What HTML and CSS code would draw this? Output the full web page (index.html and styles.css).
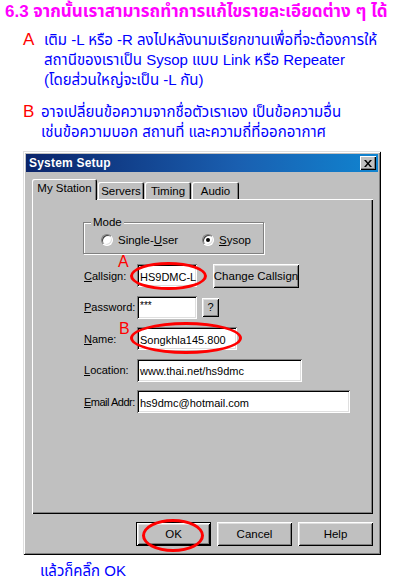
FILE: index.html
```html
<!DOCTYPE html>
<html lang="th">
<head>
<meta charset="utf-8">
<title>System Setup</title>
<link rel="stylesheet" href="styles.css">
</head>
<body>
<div class="page">
  <header class="intro">
    <h1 class="step-title">6.3 จากนั้นเราสามารถทำการแก้ไขรายละเอียดต่าง ๆ ได้</h1>
    <div class="note note-a">
      <span class="note-mark">A</span>
      <p class="note-text">เติม -L  หรือ -R ลงไปหลังนามเรียกขานเพื่อที่จะต้องการให้<br>สถานีของเราเป็น Sysop แบบ Link หรือ Repeater<br>(โดยส่วนใหญ่จะเป็น -L กัน)</p>
    </div>
    <div class="note note-b">
      <span class="note-mark">B</span>
      <p class="note-text">อาจเปลี่ยนข้อความจากชื่อตัวเราเอง เป็นข้อความอื่น<br>เช่นข้อความบอก สถานที่ และความถี่ที่ออกอากาศ</p>
    </div>
  </header>

  <div class="dialog">
    <div class="titlebar">
      <span class="titlebar-text">System Setup</span>
      <span class="close-btn"><svg width="8" height="7" viewBox="0 0 8 7"><path d="M0 0h2l2 2.5L6 0h2L5 3.5 8 7H6L4 4.5 2 7H0l3-3.5z" fill="#000"/></svg></span>
    </div>
    <div class="dialog-body">
      <div class="tabs">
        <span class="tab tab-active">My Station</span>
        <span class="tab tab-servers">Servers</span>
        <span class="tab tab-timing">Timing</span>
        <span class="tab tab-audio">Audio</span>
      </div>
      <div class="panel">
        <fieldset class="group">
          <legend class="group-label">Mode</legend>
          <div class="radios">
            <span class="radio-item radio-first"><span class="radio"></span><span class="radio-text">Single-<u>U</u>ser</span></span>
            <span class="radio-item"><span class="radio radio-on"></span><span class="radio-text"><u>S</u>ysop</span></span>
          </div>
        </fieldset>
        <div class="form">
          <div class="row">
            <span class="label"><u>C</u>allsign:</span>
            <span class="field w-callsign">HS9DMC-L<span class="mark mark-a">A</span><span class="ring ring-a"></span></span>
            <span class="btn btn-change">Change Callsign</span>
          </div>
          <div class="row">
            <span class="label"><u>P</u>assword:</span>
            <span class="field w-callsign field-pw">***</span>
            <span class="btn btn-help">?</span>
          </div>
          <div class="row">
            <span class="label"><u>N</u>ame:</span>
            <span class="field w-name">Songkhla145.800<span class="mark mark-b">B</span><span class="ring ring-b"></span></span>
          </div>
          <div class="row">
            <span class="label"><u>L</u>ocation:</span>
            <span class="field w-location">www.thai.net/hs9dmc</span>
          </div>
          <div class="row">
            <span class="label label-tight"><u>E</u>mail Addr:</span>
            <span class="field w-email">hs9dmc@hotmail.com</span>
          </div>
        </div>
      </div>
      <div class="actions">
        <span class="btn btn-action btn-default">OK<span class="ring ring-ok"></span></span>
        <span class="btn btn-action">Cancel</span>
        <span class="btn btn-action">Help</span>
      </div>
    </div>
  </div>

  <p class="outro">แล้วก็คลิ๊ก OK</p>
</div>
</body>
</html>
```

FILE: styles.css
```css
html, body {
  margin: 0;
  padding: 0;
  background: #fff;
}

.page {
  width: 399px;
  height: 588px;
  overflow: hidden;
  font-family: "Liberation Sans", "Noto Sans Thai", "Noto Sans", sans-serif;
}

/* ---------- intro text ---------- */
.intro {
  padding-top: 2px;
}

.step-title {
  margin: 0;
  padding-left: 5px;
  font-size: 17px;
  line-height: 20px;
  font-weight: bold;
  color: #ff00ff;
  white-space: nowrap;
}

.note {
  display: flex;
  align-items: flex-start;
  color: #0000ff;
}

.note-a {
  margin-top: 8px;
  padding-left: 23px;
}

.note-b {
  margin-top: 12px;
  padding-left: 23px;
}

.note-mark {
  color: #ff0000;
  font-size: 17px;
  line-height: 20px;
  width: 21px;
  flex: none;
}

.note-b .note-mark {
  width: 18px;
}

.note-text {
  margin: 0;
  font-size: 15px;
  line-height: 20px;
  white-space: nowrap;
}

/* ---------- dialog ---------- */
.dialog {
  margin: 9px 0 0 23px;
  width: 358px;
  padding: 3px;
  box-sizing: border-box;
  background: #c0c0c0;
  box-shadow: inset 1px 1px #dfdfdf, inset -1px -1px #000, inset 2px 2px #fff, inset -2px -2px #808080;
  font-family: "Liberation Sans", Arial, sans-serif;
  font-size: 11px;
  color: #000;
}

.titlebar {
  height: 18px;
  display: flex;
  align-items: center;
  justify-content: space-between;
  padding: 0 2px 0 3px;
  background: linear-gradient(to right, #0a246a 0%, #1a5fb0 60%, #1084d0 100%);
}

.titlebar-text {
  color: #fff;
  font-weight: bold;
  font-size: 12px;
  letter-spacing: 0.2px;
}

.close-btn {
  width: 16px;
  height: 14px;
  display: flex;
  align-items: center;
  justify-content: center;
  background: #c0c0c0;
  box-shadow: inset 1px 1px #fff, inset -1px -1px #000, inset -2px -2px #808080;
}

.dialog-body {
  padding: 7px 5px 6px 6px;
}

/* ---------- tabs ---------- */
.tabs {
  display: flex;
  align-items: flex-end;
  height: 20px;
  gap: 1px;
  position: relative;
  z-index: 1;
}

.tab {
  height: 17px;
  box-sizing: border-box;
  display: flex;
  align-items: center;
  justify-content: center;
  padding-top: 1px;
  background: #c0c0c0;
  border-radius: 2px 2px 0 0;
  box-shadow: inset 1px 1px #fff, inset -1px 0 #000, inset -2px 0 #808080;
  white-space: nowrap;
  font-size: 11.5px;
}

.tab-active {
  width: 65px;
  height: 21px;
  margin-bottom: -1px;
  padding-top: 0;
  padding-bottom: 3px;
}

.tab-servers { width: 46px; }
.tab-timing { width: 46px; }
.tab-audio { width: 47px; }

.panel {
  height: 315px;
  box-sizing: border-box;
  padding: 2px;
  background: #c0c0c0;
  box-shadow: inset 1px 1px #fff, inset -1px -1px #000, inset -2px -2px #808080;
}

/* ---------- mode group ---------- */
.group {
  margin: 15px 0 0 49px;
  width: 181px;
  box-sizing: border-box;
  padding: 4px 0 6px 7px;
  border: 1px solid #808080;
  box-shadow: inset 1px 1px #fff, 1px 1px #fff;
  min-width: 0;
}

.group-label {
  padding: 0 2px;
  line-height: 13px;
  background: #c0c0c0;
  font-size: 11.5px;
}

.radios {
  display: flex;
  align-items: center;
  height: 14px;
  margin-left: 10px;
}

.radio-item {
  display: flex;
  align-items: center;
  gap: 5px;
  font-size: 11.5px;
}

.radio-first {
  width: 101px;
}

.radio {
  width: 12px;
  height: 12px;
  box-sizing: border-box;
  border-radius: 50%;
  border: 1px solid;
  border-color: #808080 #fff #fff #808080;
  background: #fff;
  box-shadow: inset 1px 1px #404040, inset -1px -1px #dfdfdf;
  position: relative;
  flex: none;
}

.radio-on::after {
  content: "";
  position: absolute;
  left: 3px;
  top: 3px;
  width: 4px;
  height: 4px;
  border-radius: 50%;
  background: #000;
}

/* ---------- form ---------- */
.form {
  margin: 10px 0 0 50px;
  display: flex;
  flex-direction: column;
  gap: 8px;
}

.row {
  display: flex;
  align-items: center;
  height: 23.5px;
}

.label {
  width: 53px;
  flex: none;
  white-space: nowrap;
}

.label-tight {
  letter-spacing: -0.5px;
}

.field {
  height: 23px;
  box-sizing: border-box;
  padding: 2px 3px 0;
  display: flex;
  align-items: center;
  background: #fff;
  box-shadow: inset 1px 1px #808080, inset -1px -1px #fff, inset 2px 2px #000, inset -2px -2px #dfdfdf;
  white-space: nowrap;
  position: relative;
  flex: none;
}

.field-pw {
  align-items: flex-start;
  padding-top: 4px;
  font-size: 10px;
}

.w-callsign { width: 60px; }
.w-name { width: 100px; }
.w-location { width: 165px; }
.w-email { width: 213px; }

.btn {
  display: flex;
  align-items: center;
  justify-content: center;
  box-sizing: border-box;
  background: #c0c0c0;
  box-shadow: inset 1px 1px #fff, inset -1px -1px #000, inset 2px 2px #dfdfdf, inset -2px -2px #808080;
  white-space: nowrap;
  position: relative;
}

.btn-change {
  margin-left: 16px;
  width: 86px;
  height: 24px;
  font-size: 11.5px;
}

.btn-help {
  margin-left: 5px;
  width: 17px;
  height: 19px;
}

/* ---------- bottom buttons ---------- */
.actions {
  margin-top: 8px;
  display: flex;
  justify-content: flex-end;
  gap: 6px;
}

.btn-action {
  width: 75px;
  height: 24px;
  font-size: 11.5px;
}

.btn-default {
  border: 1px solid #000;
}

/* ---------- red annotations (overlays) ---------- */
.ring {
  position: absolute;
  border: 3px solid #ff0000;
  border-radius: 50%;
  box-sizing: border-box;
  pointer-events: none;
}

.ring-a {
  left: -7px;
  top: -2px;
  width: 77px;
  height: 28px;
}

.ring-b {
  left: -7px;
  top: -5px;
  width: 112px;
  height: 32px;
}

.ring-ok {
  left: 5px;
  top: -4px;
  width: 62px;
  height: 33px;
}

.mark {
  position: absolute;
  color: #ff0000;
  font-size: 16px;
  line-height: 16px;
}

.mark-a {
  left: -19px;
  top: -10px;
}

.mark-b {
  left: -18px;
  top: -6px;
}

/* ---------- outro ---------- */
.outro {
  margin: 6px 0 0 40px;
  font-size: 15px;
  line-height: 20px;
  color: #0000ff;
}
```
